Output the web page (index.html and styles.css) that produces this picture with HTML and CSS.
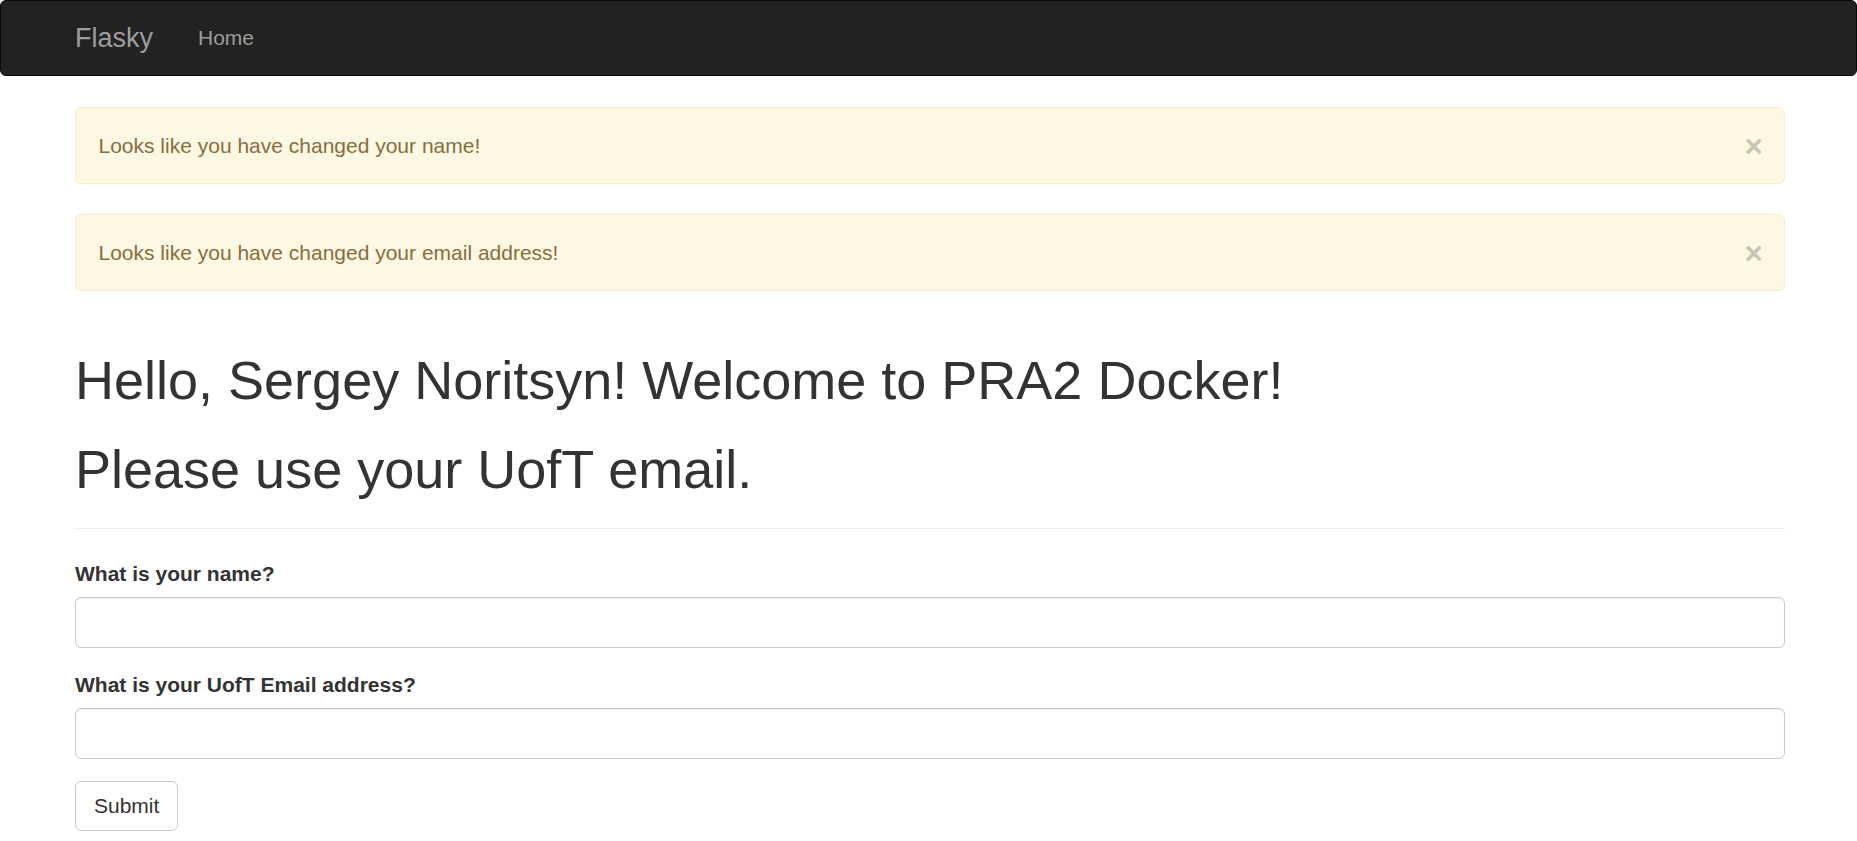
FILE: index.html
```html
<!DOCTYPE html>
<html lang="en">
<head>
<meta charset="utf-8">
<title>Flasky</title>
<link rel="stylesheet" href="styles.css">
</head>
<body>
<nav class="navbar">
  <div class="container nav-inner">
    <a class="navbar-brand" href="#">Flasky</a>
    <ul class="nav-links">
      <li><a href="#">Home</a></li>
    </ul>
  </div>
</nav>
<main class="container">
  <div class="alert">
    <span class="alert-text">Looks like you have changed your name!</span>
    <button type="button" class="close">&times;</button>
  </div>
  <div class="alert">
    <span class="alert-text">Looks like you have changed your email address!</span>
    <button type="button" class="close">&times;</button>
  </div>
  <div class="page-header">
    <h1>Hello, Sergey Noritsyn! Welcome to PRA2 Docker!</h1>
    <h1>Please use your UofT email.</h1>
  </div>
  <form class="form">
    <div class="form-group">
      <label class="control-label" for="name">What is your name?</label>
      <input class="form-control" id="name" type="text">
    </div>
    <div class="form-group">
      <label class="control-label" for="email">What is your UofT Email address?</label>
      <input class="form-control" id="email" type="text">
    </div>
    <button type="button" class="btn">Submit</button>
  </form>
</main>
</body>
</html>
```

FILE: styles.css
```css
* { box-sizing: border-box; }
html, body { margin: 0; padding: 0; }
body {
  font-family: "Liberation Sans", Arial, Helvetica, sans-serif;
  font-size: 21px;
  line-height: 1.42857;
  color: #333;
  background: #fff;
}
.container {
  width: 1755px;
  margin: 0 auto;
  padding: 0 21px 0 24px;
}
.navbar {
  background: #222;
  border: 1px solid #080808;
  border-radius: 6px;
  min-height: 76px;
  margin-bottom: 31px;
}
.nav-inner {
  display: flex;
  align-items: stretch;
  padding-left: 24px;
}
.navbar-brand {
  display: block;
  height: 74px;
  padding: 22px 22.5px 22px 0;
  font-size: 27px;
  line-height: 30px;
  color: #9d9d9d;
  text-decoration: none;
}
.nav-links {
  list-style: none;
  margin: 0;
  padding: 0;
  display: flex;
}
.nav-links a {
  display: block;
  padding: 22px 22.5px;
  line-height: 30px;
  color: #9d9d9d;
  text-decoration: none;
}
.alert {
  display: flex;
  align-items: center;
  justify-content: space-between;
  padding: 22.5px 21px 22.5px 22.5px;
  margin-bottom: 30px;
  border: 1px solid #faebcc;
  border-radius: 6px;
  background: #fcf8e3;
  color: #8a6d3b;
  line-height: 30px;
}
.close {
  display: block;
  height: 30px;
  background: transparent;
  border: 0;
  padding: 0;
  margin: 0;
  font-family: "Liberation Sans", Arial, sans-serif;
  font-size: 31.5px;
  font-weight: bold;
  line-height: 30px;
  color: #000;
  opacity: 0.2;
  text-shadow: 0 1px 0 #fff;
  cursor: pointer;
}
.page-header {
  margin: 60px 0 30px;
  padding-bottom: 13.5px;
  border-bottom: 1px solid #eee;
}
h1 {
  font-size: 54px;
  font-weight: 500;
  line-height: 1.1;
  margin: 30px 0 15px;
}
.page-header h1:first-child { margin-top: 0; }
.form-group { margin-bottom: 22.5px; }
.control-label {
  display: inline-block;
  font-weight: bold;
  margin-bottom: 7.5px;
  line-height: 30px;
}
.form-control {
  display: block;
  width: 100%;
  height: 51px;
  padding: 9px 18px;
  font-family: inherit;
  font-size: 21px;
  line-height: 1.42857;
  color: #555;
  background: #fff;
  border: 1px solid #ccc;
  border-radius: 6px;
  box-shadow: inset 0 1px 1px rgba(0,0,0,.075);
}
.btn {
  display: inline-block;
  padding: 9px 18px;
  font-family: inherit;
  font-size: 21px;
  line-height: 30px;
  color: #333;
  background: #fff;
  border: 1px solid #ccc;
  border-radius: 6px;
  cursor: pointer;
}
```
